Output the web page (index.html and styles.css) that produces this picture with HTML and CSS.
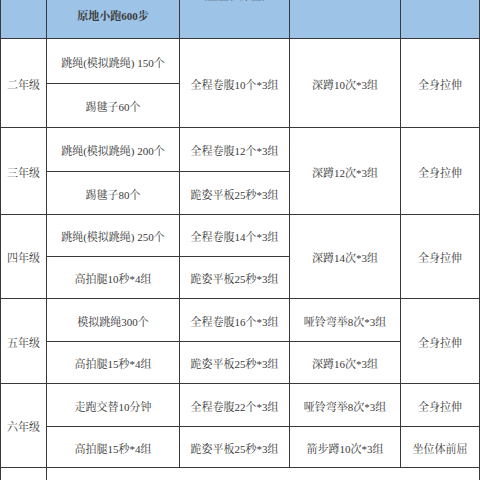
FILE: index.html
```html
<!DOCTYPE html>
<html lang="zh-CN">
<head>
<meta charset="utf-8">
<title>体育家庭作业安排</title>
<link rel="stylesheet" href="styles.css">
</head>
<body>
<table class="plan">
  <colgroup>
    <col class="c-grade">
    <col class="c-warm">
    <col class="c-core">
    <col class="c-power">
    <col class="c-stretch">
  </colgroup>
  <thead>
    <tr class="head">
      <th></th>
      <th class="h-warm">原地小跑600步</th>
      <th class="h-core">（坐上、床上）</th>
      <th></th>
      <th></th>
    </tr>
  </thead>
  <tbody>
    <tr>
      <td rowspan="2">二年级</td>
      <td>跳绳(模拟跳绳) 150个</td>
      <td rowspan="2">全程卷腹10个*3组</td>
      <td rowspan="2">深蹲10次*3组</td>
      <td rowspan="2">全身拉伸</td>
    </tr>
    <tr>
      <td>踢毽子60个</td>
    </tr>
    <tr>
      <td rowspan="2">三年级</td>
      <td>跳绳(模拟跳绳) 200个</td>
      <td>全程卷腹12个*3组</td>
      <td rowspan="2">深蹲12次*3组</td>
      <td rowspan="2">全身拉伸</td>
    </tr>
    <tr>
      <td>踢毽子80个</td>
      <td>跪姿平板25秒*3组</td>
    </tr>
    <tr>
      <td rowspan="2">四年级</td>
      <td>跳绳(模拟跳绳) 250个</td>
      <td>全程卷腹14个*3组</td>
      <td rowspan="2">深蹲14次*3组</td>
      <td rowspan="2">全身拉伸</td>
    </tr>
    <tr>
      <td>高拍腿10秒*4组</td>
      <td>跪姿平板25秒*3组</td>
    </tr>
    <tr>
      <td rowspan="2">五年级</td>
      <td>模拟跳绳300个</td>
      <td>全程卷腹16个*3组</td>
      <td>哑铃弯举8次*3组</td>
      <td rowspan="2">全身拉伸</td>
    </tr>
    <tr>
      <td>高拍腿15秒*4组</td>
      <td>跪姿平板25秒*3组</td>
      <td>深蹲16次*3组</td>
    </tr>
    <tr>
      <td rowspan="2">六年级</td>
      <td>走跑交替10分钟</td>
      <td>全程卷腹22个*3组</td>
      <td>哑铃弯举8次*3组</td>
      <td>全身拉伸</td>
    </tr>
    <tr>
      <td>高拍腿15秒*4组</td>
      <td>跪姿平板25秒*3组</td>
      <td>箭步蹲10次*3组</td>
      <td>坐位体前屈</td>
    </tr>
    <tr>
      <td></td>
      <td colspan="4"></td>
    </tr>
  </tbody>
</table>
</body>
</html>
```

FILE: styles.css
```css
html, body {
  margin: 0;
  padding: 0;
  background: #ffffff;
  overflow: hidden;
}

.plan {
  width: 480px;
  margin-top: -40px;
  table-layout: fixed;
  border-collapse: collapse;
  font-family: "Liberation Serif", "Noto Serif CJK SC", "Noto Sans CJK SC", serif;
  font-size: 11px;
  line-height: 18px;
  color: #3a3a3a;
}

.c-grade { width: 46px; }
.c-warm { width: 133px; }
.c-core { width: 110px; }
.c-power { width: 111px; }
.c-stretch { width: 79px; }

.plan th,
.plan td {
  border: 1px solid #3a3a3a;
  padding: 0;
  text-align: center;
  vertical-align: middle;
  white-space: nowrap;
  overflow: hidden;
}

.plan td {
  padding-top: 3px;
}

.head th {
  background: #9dc3e6;
  vertical-align: bottom;
  font-weight: normal;
}

.head .h-warm {
  font-weight: bold;
  padding-bottom: 13px;
}

.head .h-core {
  padding-bottom: 33px;
}

.head { height: 78px; }

tbody tr:nth-child(1) { height: 45px; }
tbody tr:nth-child(2) { height: 44px; }
tbody tr:nth-child(3) { height: 44px; }
tbody tr:nth-child(4) { height: 43px; }
tbody tr:nth-child(5) { height: 42px; }
tbody tr:nth-child(6) { height: 42px; }
tbody tr:nth-child(7) { height: 43px; }
tbody tr:nth-child(8) { height: 42px; }
tbody tr:nth-child(9) { height: 43px; }
tbody tr:nth-child(10) { height: 41px; }
tbody tr:nth-child(11) { height: 40px; }
```
